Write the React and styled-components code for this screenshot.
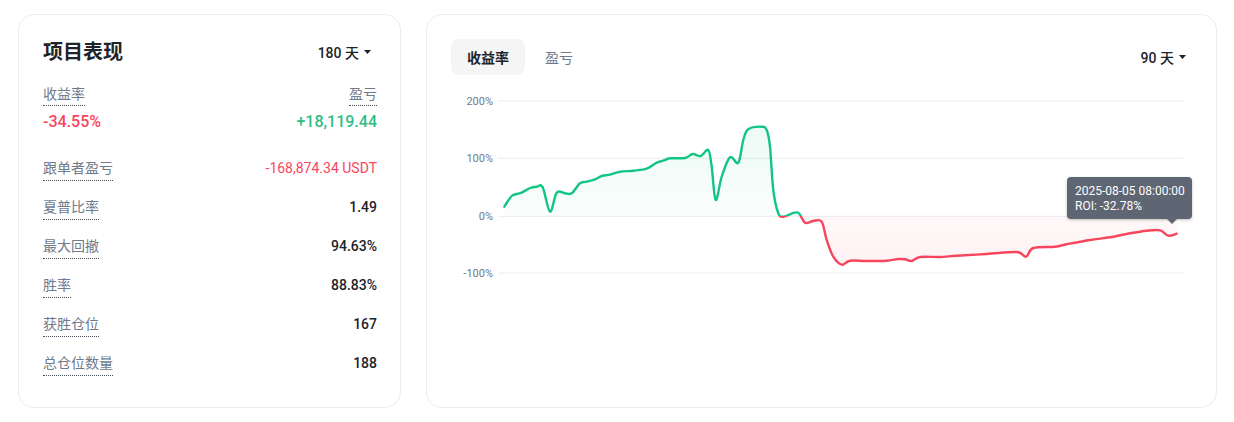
import React from 'react'
import styled, { createGlobalStyle } from 'styled-components'

const GlobalStyle = createGlobalStyle`
  body {
    margin: 0;
    background: #fff;
    font-family: Roboto, "Noto Sans CJK SC", sans-serif;
    color: #1e2329;
  }
`

const RED = '#f6465d'
const GREEN = '#2ebd85'
const LINE_GREEN = '#12c583'

const Page = styled.div`
  display: flex;
  gap: 25px;
  padding: 14px 17px 0 18px;
  height: 394px;
`

const Card = styled.div`
  box-sizing: border-box;
  border: 1px solid #eaecef;
  border-radius: 16px;
  background: #fff;
  width: ${p => p.$width}px;
  padding: ${p => p.$pad};
  display: flex;
  flex-direction: column;
`

const Header = styled.div`
  display: flex;
  align-items: center;
  justify-content: space-between;
  height: 26px;
`

const Title = styled.div`
  font-size: 20px;
  font-weight: 700;
  line-height: 26px;
`

const Dropdown = styled.div`
  display: flex;
  align-items: center;
  gap: 5px;
  font-size: 14px;
  font-weight: 500;
  margin-right: ${p => p.$mr || 0}px;
`

const Summary = styled.div`
  display: flex;
  justify-content: space-between;
  margin-top: 19px;
`

const SummaryCol = styled.div`
  display: flex;
  flex-direction: column;
  align-items: ${p => (p.$right ? 'flex-end' : 'flex-start')};
  gap: 6px;
`

const Label = styled.span`
  font-size: 14px;
  line-height: 20px;
  color: #707a8a;
  padding-bottom: ${p => p.$pb || 1}px;
  border-bottom: 1px dotted #474d57;
`

const BigValue = styled.div`
  font-size: 16px;
  line-height: 20px;
  font-weight: 500;
  color: ${p => p.$color};
`

const Rows = styled.div`
  display: flex;
  flex-direction: column;
  gap: 16px;
  margin-top: 26px;
`

const Row = styled.div`
  display: flex;
  justify-content: space-between;
  align-items: flex-start;
`

const RowValue = styled.span`
  font-size: 14px;
  line-height: 20px;
  font-weight: ${p => (p.$color ? 400 : 500)};
  color: ${p => p.$color || '#1e2329'};
`

const TopBar = styled.div`
  display: flex;
  align-items: center;
  justify-content: space-between;
`

const Tabs = styled.div`
  display: flex;
  gap: 4px;
`

const Tab = styled.div`
  height: 36px;
  padding: 0 16px;
  display: flex;
  align-items: center;
  border-radius: 8px;
  font-size: 14px;
  font-weight: ${p => (p.$active ? 600 : 400)};
  color: ${p => (p.$active ? '#1e2329' : '#707a8a')};
  background: ${p => (p.$active ? '#f5f5f5' : 'transparent')};
`

const ChartWrap = styled.div`
  position: relative;
  margin-top: 15px;
  height: 200px;
`

const Tooltip = styled.div`
  position: absolute;
  left: 616px;
  top: 87px;
  width: 125px;
  box-sizing: border-box;
  padding: 7px 8px 5px;
  border-radius: 4px;
  background: #5e6673;
  box-shadow: 0 1px 3px rgba(0, 0, 0, 0.25);
  color: #fff;
  font-size: 12px;
  line-height: 15px;
  white-space: nowrap;
  &::after {
    content: '';
    position: absolute;
    left: 100px;
    bottom: -5px;
    border-left: 5px solid transparent;
    border-right: 5px solid transparent;
    border-top: 5px solid #5e6673;
  }
`

function Caret() {
  return (
    <svg width="7" height="4" viewBox="0 0 7 4">
      <path d="M0 0h7L3.5 4z" fill="#1e2329" />
    </svg>
  )
}

// page coordinates traced from the chart
const RAW = [
  [504.3, 206.7], [511.7, 196], [516.7, 194], [521.7, 192.7], [530, 188], [536.7, 186.7],
  [542.7, 187.3], [550, 211.7], [556.7, 192.7], [565, 193.3], [571.7, 193.3], [580, 183.3],
  [586.7, 181.7], [595, 179.3], [601.7, 176], [610, 174.7], [620, 171.7], [633.3, 170.7],
  [646.7, 168.7], [656.7, 162.7], [663.3, 160.7], [670, 158.3], [685, 158], [692.7, 154],
  [700.7, 156], [708.3, 150], [711.7, 166.7], [715.7, 200], [721.7, 176.7], [730, 157.3],
  [738.3, 162.7], [743.3, 140], [748.3, 129.3], [761.7, 126.7], [766.7, 130], [770, 146.7],
  [773.3, 190], [778.3, 213.3], [783.3, 216.7], [790, 214.3], [798.3, 212.7], [805, 222.7],
  [813.3, 221], [821.7, 221.7], [826.7, 240], [833.3, 256.7], [841.7, 264.7], [850, 260.7],
  [866.7, 261], [886.7, 260.7], [898.3, 259], [905, 259.3], [911.7, 261], [920, 257],
  [940, 257], [956.7, 255.7], [986.7, 254], [1016.7, 252], [1026, 256.7], [1033.3, 248],
  [1055, 246.7], [1066.7, 244.3], [1090, 240], [1110, 237.3], [1130, 233.3], [1146.7, 230.7],
  [1160, 230.3], [1168.3, 235.7], [1176.7, 233.7],
]
const PTS = RAW.map(([x, y]) => [x - 451, y - 90])

const smooth = pts => {
  let d = `M${pts[0][0]},${pts[0][1]}`
  for (let i = 0; i < pts.length - 1; i++) {
    const p0 = pts[i - 1] || pts[i]
    const p1 = pts[i]
    const p2 = pts[i + 1]
    const p3 = pts[i + 2] || p2
    const c1x = p1[0] + (p2[0] - p0[0]) / 6
    const c1y = p1[1] + (p2[1] - p0[1]) / 6
    const c2x = p2[0] - (p3[0] - p1[0]) / 6
    const c2y = p2[1] - (p3[1] - p1[1]) / 6
    d += ` C${c1x.toFixed(1)},${c1y.toFixed(1)} ${c2x.toFixed(1)},${c2y.toFixed(1)} ${p2[0]},${p2[1]}`
  }
  return d
}

const ZERO = 126.3
const GRID = [
  { y: 11, label: '200%' },
  { y: 68.3, label: '100%' },
  { y: ZERO, label: '0%' },
  { y: 183, label: '-100%' },
]

function RoiChart() {
  const line = smooth(PTS)
  const first = PTS[0]
  const last = PTS[PTS.length - 1]
  const area = `${line} L${last[0]},${ZERO} L${first[0]},${ZERO} Z`
  const split = (ZERO / 200).toFixed(4)

  return (
    <svg width="736" height="200" viewBox="0 0 736 200">
      <defs>
        <linearGradient id="stroke" gradientUnits="userSpaceOnUse" x1="0" y1="0" x2="0" y2="200">
          <stop offset={split} stopColor={LINE_GREEN} />
          <stop offset={split} stopColor={RED} />
        </linearGradient>
        <linearGradient id="fill" gradientUnits="userSpaceOnUse" x1="0" y1="0" x2="0" y2="200">
          <stop offset="0.18" stopColor={LINE_GREEN} stopOpacity="0.08" />
          <stop offset={split} stopColor={LINE_GREEN} stopOpacity="0.02" />
          <stop offset={split} stopColor={RED} stopOpacity="0.04" />
          <stop offset="0.9" stopColor={RED} stopOpacity="0.07" />
        </linearGradient>
      </defs>
      {GRID.map(g => (
        <g key={g.label}>
          <line x1="47" x2="732" y1={g.y} y2={g.y} stroke="#eaecef" strokeWidth="1" />
          <text
            x="42"
            y={g.y + 4}
            textAnchor="end"
            fontSize="11"
            fill="#707a8a"
            fontFamily="Roboto, sans-serif"
          >
            {g.label}
          </text>
        </g>
      ))}
      <path d={area} fill="url(#fill)" />
      <path d={line} fill="none" stroke="url(#stroke)" strokeWidth="2.4" strokeLinejoin="round" strokeLinecap="round" />
    </svg>
  )
}

const STATS = [
  { label: '跟单者盈亏', value: '-168,874.34 USDT', color: RED },
  { label: '夏普比率', value: '1.49' },
  { label: '最大回撤', value: '94.63%' },
  { label: '胜率', value: '88.83%' },
  { label: '获胜仓位', value: '167' },
  { label: '总仓位数量', value: '188' },
]

export default function App() {
  return (
    <>
      <GlobalStyle />
      <Page>
        <Card $width={383} $pad="24px 23px 0 24px">
          <Header>
            <Title>项目表现</Title>
            <Dropdown $mr={6}>
              180 天 <Caret />
            </Dropdown>
          </Header>
          <Summary>
            <SummaryCol>
              <Label>收益率</Label>
              <BigValue $color={RED}>-34.55%</BigValue>
            </SummaryCol>
            <SummaryCol $right>
              <Label>盈亏</Label>
              <BigValue $color={GREEN}>+18,119.44</BigValue>
            </SummaryCol>
          </Summary>
          <Rows>
            {STATS.map(s => (
              <Row key={s.label}>
                <Label $pb={2}>{s.label}</Label>
                <RowValue $color={s.color}>{s.value}</RowValue>
              </Row>
            ))}
          </Rows>
        </Card>
        <Card $width={791} $pad="24px 30px 0 24px">
          <TopBar>
            <Tabs>
              <Tab $active>收益率</Tab>
              <Tab>盈亏</Tab>
            </Tabs>
            <Dropdown>
              90 天 <Caret />
            </Dropdown>
          </TopBar>
          <ChartWrap>
            <RoiChart />
            <Tooltip>
              2025-08-05 08:00:00
              <br />
              ROI: -32.78%
            </Tooltip>
          </ChartWrap>
        </Card>
      </Page>
    </>
  )
}
